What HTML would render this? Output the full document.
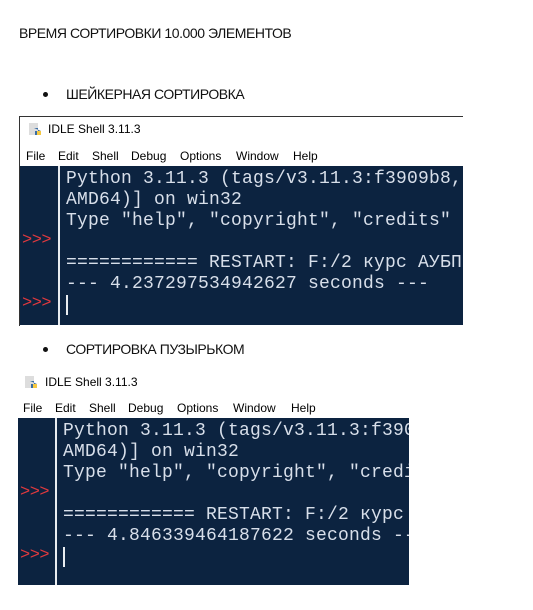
<!DOCTYPE html>
<html><head><meta charset="utf-8"><style>
body{margin:0;width:533px;height:610px;background:#fff;position:relative;overflow:hidden;font-family:"Liberation Sans",sans-serif;color:#111}
.a{position:absolute;white-space:nowrap}
.h{font-size:14px;letter-spacing:-0.45px}
.dot{width:5px;height:5px;border-radius:50%;background:#111}
.tt{font-size:12px;color:#000}
.m{position:absolute;font-size:12px;color:#000}
.dark{position:absolute;background:#0c2340;overflow:hidden}
.gl{position:absolute;top:0;bottom:0;width:2px;background:#e8ecf0}
.code{position:absolute;font-family:"Liberation Mono",monospace;font-size:18px;letter-spacing:0.2px;color:#d8dfea;line-height:21px;white-space:pre}
.pr{position:absolute;font-family:"Liberation Mono",monospace;font-size:17px;color:#e0393e;letter-spacing:-0.5px}
.cur{position:absolute;width:2px;height:20px;background:#e8ecf0}
.ic{position:absolute;width:14px;height:14px}
</style></head><body>
<div class="a h" style="left:19px;top:25px">ВРЕМЯ СОРТИРОВКИ 10.000 ЭЛЕМЕНТОВ</div>
<div class="a dot" style="left:43px;top:92px"></div>
<div class="a h" style="left:66px;top:86px">ШЕЙКЕРНАЯ СОРТИРОВКА</div>

<div class="a" style="left:19px;top:116px;width:444px;height:1px;background:#333"></div>
<div class="a" style="left:19px;top:116px;width:1px;height:210px;background:#333"></div>
<svg class="ic" style="left:28px;top:122px" viewBox="0 0 14 14"><rect x="1" y="1" width="9" height="12" fill="#ddd"/><path d="M6 6h4v3H7v4h6V9z" fill="#3a6ea5"/><path d="M9 9h4v4H9z" fill="#f5c842"/></svg>
<div class="a tt" style="left:48px;top:122px">IDLE Shell 3.11.3</div>
<div class="m" style="left:26px;top:149px">File</div><div class="m" style="left:58px;top:149px">Edit</div><div class="m" style="left:92px;top:149px">Shell</div><div class="m" style="left:131px;top:149px">Debug</div><div class="m" style="left:180px;top:149px">Options</div><div class="m" style="left:236px;top:149px">Window</div><div class="m" style="left:293px;top:149px">Help</div>
<div class="dark" style="left:20px;top:166px;width:443px;height:159px">
 <div class="gl" style="left:38px"></div>
 <div class="code" style="left:46px;top:3px">Python 3.11.3 (tags/v3.11.3:f3909b8,
AMD64)] on win32
Type "help", "copyright", "credits"

============ RESTART: F:/2 курс АУБП
--- 4.237297534942627 seconds ---</div>
 <div class="pr" style="left:2px;top:65px">&gt;&gt;&gt;</div>
 <div class="pr" style="left:2px;top:128px">&gt;&gt;&gt;</div>
 <div class="cur" style="left:46px;top:129px"></div>
</div>

<div class="a dot" style="left:43px;top:347px"></div>
<div class="a h" style="left:66px;top:341px">СОРТИРОВКА ПУЗЫРЬКОМ</div>

<svg class="ic" style="left:24px;top:375px" viewBox="0 0 14 14"><rect x="1" y="1" width="9" height="12" fill="#ddd"/><path d="M6 6h4v3H7v4h6V9z" fill="#3a6ea5"/><path d="M9 9h4v4H9z" fill="#f5c842"/></svg>
<div class="a tt" style="left:45px;top:375px">IDLE Shell 3.11.3</div>
<div class="m" style="left:23px;top:401px">File</div><div class="m" style="left:55px;top:401px">Edit</div><div class="m" style="left:89px;top:401px">Shell</div><div class="m" style="left:128px;top:401px">Debug</div><div class="m" style="left:177px;top:401px">Options</div><div class="m" style="left:233px;top:401px">Window</div><div class="m" style="left:291px;top:401px">Help</div>
<div class="dark" style="left:18px;top:418px;width:391px;height:167px">
 <div class="gl" style="left:37px"></div>
 <div class="code" style="left:45px;top:3px">Python 3.11.3 (tags/v3.11.3:f3909b8,
AMD64)] on win32
Type "help", "copyright", "credits"

============ RESTART: F:/2 курс АУБП
--- 4.846339464187622 seconds ---</div>
 <div class="pr" style="left:2px;top:65px">&gt;&gt;&gt;</div>
 <div class="pr" style="left:2px;top:128px">&gt;&gt;&gt;</div>
 <div class="cur" style="left:45px;top:129px"></div>
</div>
</body></html>
